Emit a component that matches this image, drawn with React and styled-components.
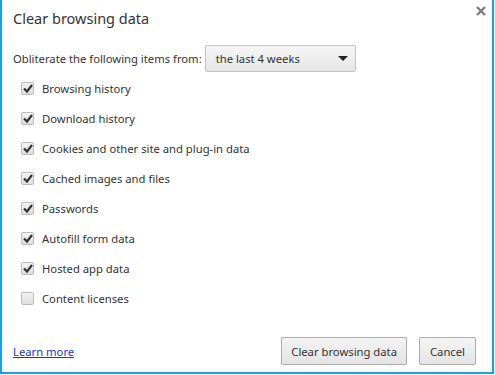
import React from 'react';
import styled, { createGlobalStyle } from 'styled-components';

const Global = createGlobalStyle`
  html, body { margin: 0; padding: 0; background: #fff; }
  body { font-family: "Noto Sans", "Open Sans", sans-serif; color: #333; }
`;

const Dialog = styled.div`
  box-sizing: border-box;
  width: 494px;
  height: 374px;
  border: 2px solid #1ba1e2;
  border-top: none;
  background: #fff;
  position: relative;
  display: flex;
  flex-direction: column;
  padding: 0 16px 0 9px;
`;

const Title = styled.h1`
  margin: 8px 0 0 2px;
  font-size: 14.5px;
  font-weight: normal;
  color: #333;
  line-height: 20px;
`;

const Close = styled.button`
  position: absolute;
  top: 4px;
  right: 4px;
  width: 14px;
  height: 14px;
  padding: 0;
  border: none;
  background: none;
  display: flex;
  align-items: center;
  justify-content: center;
`;

const Period = styled.div`
  display: flex;
  align-items: center;
  margin: 17px 0 0 2px;
  font-size: 11.25px;
  gap: 3px;
`;

const Select = styled.div`
  box-sizing: border-box;
  width: 151px;
  height: 27px;
  border: 1px solid #c4c4c4;
  border-radius: 2px;
  background: linear-gradient(#f6f6f6, #e6e6e6);
  display: flex;
  align-items: center;
  justify-content: space-between;
  padding: 0 6px 0 10px;
  font-size: 11.25px;
  color: #333;
`;

const Arrow = styled.span`
  width: 0;
  height: 0;
  border-left: 5px solid transparent;
  border-right: 5px solid transparent;
  border-top: 5px solid #222;
  margin-right: 1px;
`;

const List = styled.ul`
  list-style: none;
  margin: 1px 0 0 0;
  padding: 0 0 0 10px;
  display: flex;
  flex-direction: column;
`;

const Item = styled.li`
  height: 30px;
  display: flex;
  align-items: center;
  gap: 8px;
  font-size: 11.25px;
  color: #333;
`;

const Box = styled.span`
  box-sizing: border-box;
  width: 13px;
  height: 13px;
  border: 1px solid #bcbcbc;
  border-radius: 2px;
  background: linear-gradient(#f2f2f2, #dedede);
  display: flex;
  align-items: center;
  justify-content: center;
`;

const Footer = styled.div`
  margin-top: auto;
  margin-bottom: 7px;
  display: flex;
  align-items: center;
  gap: 12px;
  padding-left: 2px;
`;

const Link = styled.a`
  font-size: 11.25px;
  color: #1a34d8;
  text-decoration: underline;
  margin-right: auto;
`;

const Button = styled.button`
  box-sizing: border-box;
  height: 28px;
  padding: 0 ${props => props.pad}px;
  border: 1px solid #acacac;
  border-radius: 2px;
  background: linear-gradient(#f4f4f4, #e4e4e4);
  font-family: inherit;
  font-size: 11.25px;
  color: #333;
`;

const items = [
  ['Browsing history', true],
  ['Download history', true],
  ['Cookies and other site and plug-in data', true],
  ['Cached images and files', true],
  ['Passwords', true],
  ['Autofill form data', true],
  ['Hosted app data', true],
  ['Content licenses', false],
];

const Check = () => (
  <svg width="10" height="9" viewBox="0 0 10 9">
    <path d="M1 4.5 L4 7.5 L9 1" fill="none" stroke="#333" strokeWidth="2.2" />
  </svg>
);

export default function App() {
  return (
    <>
      <Global />
      <Dialog>
        <Title>Clear browsing data</Title>
        <Close aria-label="close">
          <svg width="10" height="10" viewBox="0 0 10 10">
            <path d="M1 1 L9 9 M9 1 L1 9" stroke="#7a7a7a" strokeWidth="2.3" />
          </svg>
        </Close>
        <Period>
          <span>Obliterate the following items from:</span>
          <Select>
            <span>the last 4 weeks</span>
            <Arrow />
          </Select>
        </Period>
        <List>
          {items.map(([label, on]) => (
            <Item key={label}>
              <Box>{on && <Check />}</Box>
              <span>{label}</span>
            </Item>
          ))}
        </List>
        <Footer>
          <Link href="#">Learn more</Link>
          <Button pad={9}>Clear browsing data</Button>
          <Button pad={10}>Cancel</Button>
        </Footer>
      </Dialog>
    </>
  );
}
